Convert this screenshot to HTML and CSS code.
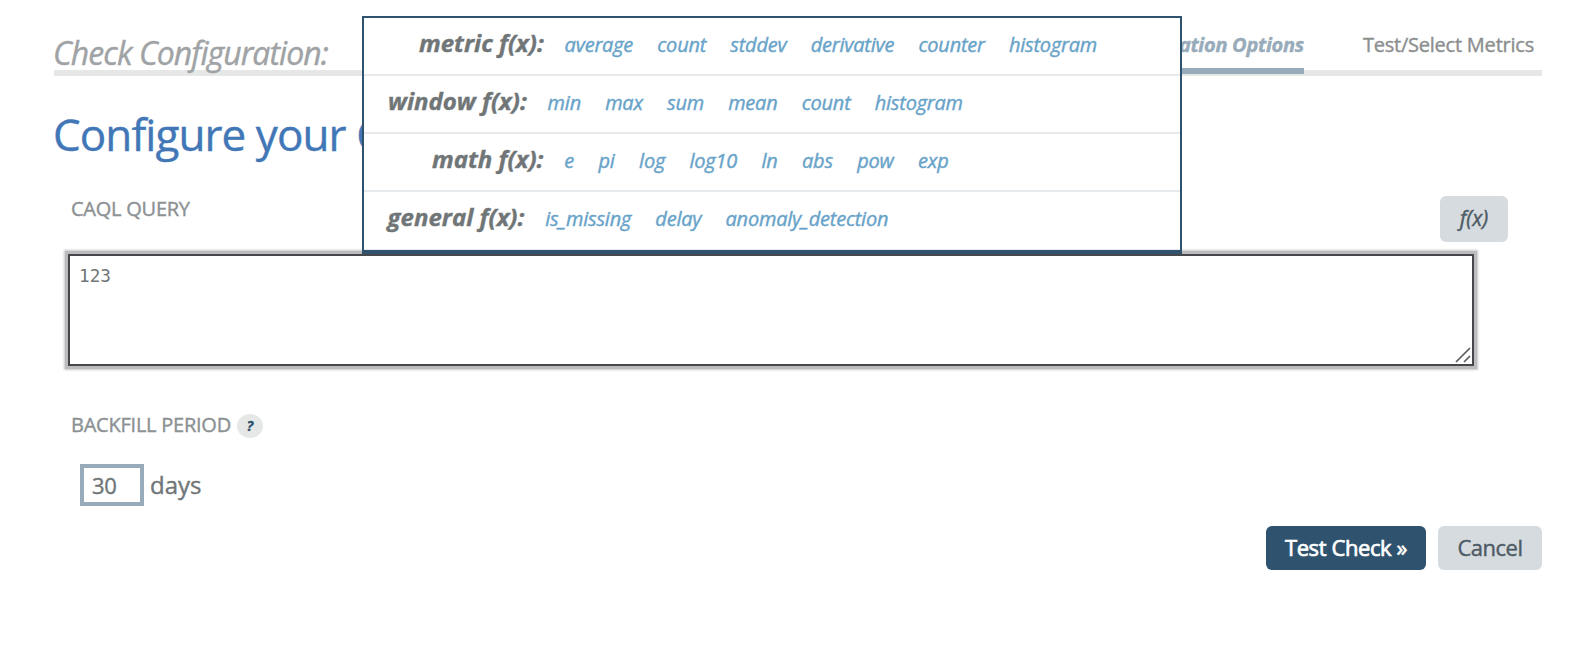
FILE: index.html
```html
<!DOCTYPE html>
<html lang="en">
<head>
<meta charset="utf-8">
<title>Check Configuration</title>
<link rel="stylesheet" href="styles.css">
</head>
<body>
<main class="page">
  <header class="topbar">
    <div class="topbar-title">Check Configuration:</div>
    <nav class="tabs">
      <a class="tab tab-active">Configuration Options</a>
      <a class="tab">Test/Select Metrics</a>
    </nav>
  </header>
  <h1 class="heading">Configure your C</h1>
  <section class="query">
    <div class="query-head">
      <label class="label" for="query">CAQL QUERY</label>
      <button class="btn btn-fx">f(x)</button>
    </div>
    <div class="query-box">
      <textarea class="query-input" id="query">123</textarea>
      <svg class="grip" viewBox="0 0 16 16"><path d="M1 15 15 1M9 15 15 9" fill="none" stroke="#5c5c5c" stroke-width="1.7"/></svg>
    </div>
  </section>
  <section class="backfill">
    <div class="backfill-head"><span class="label">BACKFILL PERIOD</span><span class="help">?</span></div>
    <div class="backfill-row"><input class="days-input" value="30"><span class="days">days</span></div>
  </section>
  <footer class="actions">
    <button class="btn btn-primary">Test Check »</button>
    <button class="btn btn-cancel">Cancel</button>
  </footer>
  <div class="popup">
    <div class="row row-metric"><b class="kind">metric f(x):</b><a>average</a><a>count</a><a>stddev</a><a>derivative</a><a>counter</a><a>histogram</a></div>
    <div class="row row-window"><b class="kind">window f(x):</b><a>min</a><a>max</a><a>sum</a><a>mean</a><a>count</a><a>histogram</a></div>
    <div class="row row-math"><b class="kind">math f(x):</b><a>e</a><a>pi</a><a>log</a><a>log10</a><a>ln</a><a>abs</a><a>pow</a><a>exp</a></div>
    <div class="row row-general"><b class="kind">general f(x):</b><a>is_missing</a><a>delay</a><a>anomaly_detection</a></div>
  </div>
</main>
</body>
</html>
```
FILE: styles.css
```css
* { box-sizing: border-box; }
body { margin: 0; background: #fff; font-family: "Open Sans", sans-serif; color: #707677; -webkit-text-stroke: 0.4px currentColor; }
.page { position: relative; width: 1588px; height: 650px; padding: 0 46px 0 54px; overflow: hidden; white-space: nowrap; }
.topbar { display: flex; justify-content: space-between; height: 76px; border-bottom: 6px solid #e6e8e8; }
.topbar-title { padding-top: 31px; margin-left: -1px; font-size: 32px; line-height: 44px; font-style: italic; color: #9fa3a5; letter-spacing: -0.95px; }
.tabs { display: flex; gap: 51px; height: 74px; }
.tab { height: 74px; padding: 31px 8px 0; font-size: 20px; line-height: 28px; color: #8c8f8f; letter-spacing: -0.22px; }
.tab-active { padding: 31px 0 0; font-weight: 700; font-style: italic; color: #97abba; border-bottom: 6px solid #97abba; letter-spacing: -0.3px; }
.heading { margin: 28px 0 1px -1px; font-size: 44px; line-height: 60px; font-weight: 400; color: #4277b7; letter-spacing: -0.92px; }
.query { padding: 31px 34px 0 14px; }
.query-head { display: flex; justify-content: space-between; height: 58px; }
.label { font-size: 20px; line-height: 28px; color: #8c9193; letter-spacing: -0.24px; }
.query-head .label { margin-top: -1px; padding-left: 3px; }
.btn { border: 0; border-radius: 6px; padding: 0 0 2px; font-family: inherit; font-size: 22px; line-height: 30px; color: #4d5a63; background: #d6dbdf; letter-spacing: -0.5px; -webkit-text-stroke: inherit; }
.btn-fx { width: 68px; height: 46px; padding-bottom: 2px; font-size: 21px; font-style: italic; letter-spacing: 0; }
.query-box { position: relative; width: 1406px; height: 112px; }
.query-input { display: block; width: 100%; height: 100%; margin: 0; padding: 10px 9px; border: 2px solid #46474b; border-radius: 0; outline: 0; resize: none; box-shadow: 0 0 0 3px #bcbcbe, 0 0 2px 4px #c8c8ca; font: 17.7px/20px "DejaVu Sans Mono", monospace; color: #707677; -webkit-text-stroke: 0; }
.grip { position: absolute; right: 3px; bottom: 3px; width: 16px; height: 16px; }
.backfill { padding: 45px 0 0 17px; }
.backfill-head { display: flex; align-items: center; gap: 6px; height: 28px; }
.help { width: 26px; height: 24px; margin-top: 2px; border-radius: 50%; background: #e6e8e8; color: #2f526e; font-size: 14px; font-weight: 700; font-style: italic; line-height: 24px; text-align: center; }
.backfill-row { display: flex; align-items: center; gap: 6px; margin: 25px 0 0 9px; height: 42px; }
.days-input { width: 64px; height: 42px; padding: 0 8px; border: 4px solid #97abba; outline: 0; font: 22px "Open Sans", sans-serif; color: #707677; letter-spacing: -0.4px; }
.days { font-size: 24px; line-height: 34px; }
.actions { display: flex; justify-content: flex-end; gap: 12px; margin-top: 20px; }
.btn-primary { width: 160px; height: 44px; background: #2f526e; color: #fff; letter-spacing: -0.4px; -webkit-text-stroke: 0.7px #fff; }
.btn-cancel { width: 104px; height: 44px; }
.popup { position: absolute; left: 362px; top: 16px; width: 820px; height: 238px; background: #fff; border: 2px solid #2f526e; border-bottom-width: 4px; font-style: italic; }
.row { display: flex; align-items: baseline; gap: 24.2px; height: 58px; border-bottom: 2px solid #e6eaed; padding-top: 8px; font-size: 20px; line-height: 34px; color: #68a3c9; letter-spacing: -0.22px; }
.row:last-child { border-bottom-width: 1px; }
.kind { margin-right: -3.4px; font-size: 24px; letter-spacing: 0; color: #707677; }
.row-metric { padding-left: 55px; }
.row-window { padding-left: 24px; }
.row-math { padding-left: 68px; gap: 24.4px; }
.row-general { padding-left: 23.6px; }
```
